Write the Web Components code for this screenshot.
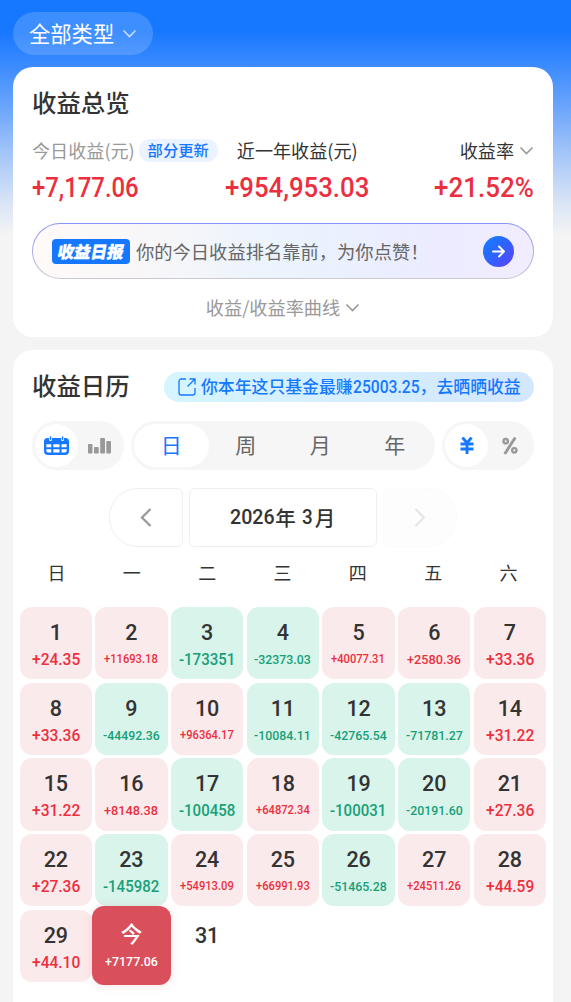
<!DOCTYPE html>
<html lang="zh-CN">
<head>
<meta charset="utf-8">
<meta name="viewport" content="width=device-width, initial-scale=1">
<title>收益总览</title>
<style>
    html, body { margin: 0; padding: 0; }
    body {
        height: 1002px;
        overflow: hidden;
        background: #f4f4f4;
        color: #333;
        font-family: "Noto Sans CJK SC", sans-serif;
    }
</style>
</head>
<body>
<profit-page></profit-page>

<script>
    // number set in a narrow face, squeezed to the given width
    class NumText extends HTMLElement {
        connectedCallback() {
            const width = Number(this.getAttribute('w'));
            this.attachShadow({ mode: 'open' }).innerHTML = `
                <style>
                    :host {
                        display: inline-block;
                        width: ${width}px;
                        font-family: Roboto, "Liberation Sans", sans-serif;
                        font-weight: 500;
                        white-space: nowrap;
                        text-align: left;
                    }
                    span { display: inline-block; transform-origin: 0 50%; }
                </style>
                <span><slot></slot></span>
            `;
            const span = this.shadowRoot.querySelector('span');
            span.style.transform = `scaleX(${width / span.offsetWidth})`;
        }
    }

    const ICONS = {
        down: '<path d="M1.5 1.5 7.5 7.5l6-6" fill="none" stroke="currentColor" stroke-width="1.6"/>',
        left: '<path d="M10.5 1 2 9.5l8.5 8.5" fill="none" stroke="currentColor" stroke-width="2.3"/>',
        right: '<path d="M1.5 1 10 9.5 1.5 18" fill="none" stroke="currentColor" stroke-width="1.8"/>',
        arrow: '<path d="M1 6.5h11M7 1.5l5 5-5 5" fill="none" stroke="currentColor" stroke-width="1.9" stroke-linecap="round" stroke-linejoin="round"/>',
        share: '<path d="M8 1H3.2A2.2 2.2 0 0 0 1 3.2v11.6A2.2 2.2 0 0 0 3.2 17h11.6a2.2 2.2 0 0 0 2.2-2.2V10M11.5 1H17v5.500M17 1 9.500 8.500" fill="none" stroke="currentColor" stroke-width="1.300"/>',
        calendar: '<path fill="currentColor" d="M3.500 2H5v1.500a1.500 1.500 0 0 0 3 0V2h9v1.500a1.500 1.500 0 0 0 3 0V2h1.500A3.500 3.500 0 0 1 25 5.500V15a4 4 0 0 1-4 4H4a4 4 0 0 1-4-4V5.500A3.500 3.500 0 0 1 3.500 2z"/><path stroke="currentColor" stroke-width="1.500" stroke-linecap="round" d="M6.500 1v2.200M18.500 1v2.200"/><g fill="#fff"><path d="M2.300 8.300h5v3h-5zM9.300 8.300h6.200v3H9.300zM17.500 8.300h5.200v3h-5.200zM2.300 13.200h5v3.200H4a1.700 1.700 0 0 1-1.700-1.700zM9.300 13.200h6.200v3.200H9.300zM17.500 13.200h5.200v1.500a1.700 1.700 0 0 1-1.700 1.700h-3.500z"/></g>',
        bars: '<g fill="currentColor"><rect y="6" width="4.500" height="9.500" rx=".8"/><rect x="6" y="9" width="4.700" height="6.500" rx=".8"/><rect x="12.200" width="4.800" height="15.500" rx=".8"/><rect x="18.300" y="3" width="4.700" height="12.500" rx=".8"/></g>',
        yen: '<path d="M2.500 .5 7 6 11.500 .5M7 6v11M.5 7h13M.5 12h13" fill="none" stroke="currentColor" stroke-width="2.900"/>',
        percent: '<g fill="none" stroke="currentColor" stroke-width="2.300"><circle cx="3.700" cy="4.200" r="2.200"/><circle cx="12.300" cy="13.300" r="2.200"/><path stroke-width="2.900" d="M13.300 .5 2.700 17"/></g>'
    };

    class UiIcon extends HTMLElement {
        connectedCallback() {
            const w = this.getAttribute('w');
            const h = this.getAttribute('h');
            this.attachShadow({ mode: 'open' }).innerHTML = `
                <style>
                    :host { display: block; flex: none; width: ${w}px; height: ${h}px; }
                    svg { display: block; }
                </style>
                <svg width="${w}" height="${h}" viewBox="0 0 ${w} ${h}">${ICONS[this.getAttribute('name')]}</svg>
            `;
        }
    }

    class UiCard extends HTMLElement {
        connectedCallback() {
            this.attachShadow({ mode: 'open' }).innerHTML = `
                <style>
                    :host {
                        display: block;
                        box-sizing: border-box;
                        border-radius: 20px;
                        background: #fff;
                    }
                </style>
                <slot></slot>
            `;
        }
    }

    class DailyBanner extends HTMLElement {
        connectedCallback() {
            this.attachShadow({ mode: 'open' }).innerHTML = `
                <style>
                    :host {
                        display: flex;
                        align-items: center;
                        box-sizing: border-box;
                        height: 56px;
                        padding: 0 19.5px 0 19px;
                        border: 1px solid transparent;
                        border-radius: 28px;
                        background:
                            linear-gradient(90deg, #fffaf8 0%, #f9f7f8 20%, #eaf3fe 52%, #ecebff 82%, #f2edfe 100%) padding-box,
                            linear-gradient(180deg, #8794f8, #cbc9d3) border-box;
                        font-size: 18.300px;
                        color: #666;
                    }
                    .badge {
                        width: 78px;
                        height: 25px;
                        border-radius: 4px;
                        background: #1677ff;
                        color: #fff;
                        font-size: 16.500px;
                        font-weight: 900;
                        line-height: 24px;
                        text-align: center;
                    }
                    .badge span { display: inline-block; transform: skewX(-10deg); -webkit-text-stroke: .4px #fff; }
                    .text { flex: 1; padding-left: 6px; line-height: 26px; white-space: nowrap; }
                    .go {
                        display: grid;
                        place-items: center;
                        width: 31px;
                        height: 31px;
                        border-radius: 50%;
                        background: linear-gradient(135deg, #157bff 10%, #345fff 55%, #5b43ff 95%);
                        color: #fff;
                    }
                </style>
                <div class="badge"><span>收益日报</span></div>
                <div class="text"><slot></slot></div>
                <div class="go"><ui-icon name="arrow" w="13" h="13"></ui-icon></div>
            `;
        }
    }

    class SegGroup extends HTMLElement {
        connectedCallback() {
            this.attachShadow({ mode: 'open' }).innerHTML = `
                <style>
                    :host {
                        display: flex;
                        box-sizing: border-box;
                        height: 49px;
                        padding: 3px;
                        border-radius: 25px;
                        background: #f6f6f6;
                        color: #666;
                        font-size: 21px;
                        line-height: 41px;
                    }
                    ::slotted(*) {
                        display: flex;
                        flex: 1;
                        justify-content: center;
                        border-radius: 22px;
                    }
                    ::slotted(.on) { background: #fff; color: #1677ff; }
                    ::slotted(.off) { color: #999; }
                    ::slotted(.icon) { align-items: center; }
                </style>
                <slot></slot>
            `;
        }
    }

    class DayCell extends HTMLElement {
        connectedCallback() {
            const amount = this.getAttribute('amount') || '';
            const today = this.hasAttribute('today');
            let size = 16.200;
            let width = amount.length === 7 ? 56.500 : 48;
            if (amount.length === 8) { size = 13.200; width = 54; }
            if (amount.length === 9) {
                size = amount[0] === '-' ? 13.200 : 12;
                width = amount[0] === '-' ? 57 : 54;
            }
            let bg = 'transparent';
            if (amount) bg = amount[0] === '-' ? '#d8f4eb' : '#fbeaeb';
            this.attachShadow({ mode: 'open' }).innerHTML = `
                <style>
                    :host {
                        display: flex;
                        flex-direction: column;
                        align-items: center;
                        box-sizing: border-box;
                        padding-top: 13px;
                        border-radius: 12px;
                        background: ${bg};
                        color: ${amount[0] === '-' ? '#17a078' : '#eb2f3f'};
                    }
                    :host([today]) {
                        z-index: 1;
                        margin: -3.300px;
                        padding-top: 16px;
                        background: #d94f5b;
                        color: #fff;
                        box-shadow: 0 1px 10px rgba(217, 79, 91, .16);
                    }
                    .day {
                        height: 25px;
                        color: #333;
                        font: 500 21.500px/25px Roboto, "Noto Sans CJK SC", sans-serif;
                        letter-spacing: -.2px;
                    }
                    :host([today]) .day { color: #fff; }
                    .amount { height: 29px; font-size: ${size}px; line-height: 29px; }
                </style>
                <div class="day"><slot></slot></div>
                ${amount ? `<num-text class="amount" w="${today ? 53 : width}">${amount}</num-text>` : ''}
            `;
        }
    }

    class MonthGrid extends HTMLElement {
        connectedCallback() {
            const amounts = [
                '+24.35', '+11693.18', '-173351', '-32373.03', '+40077.31', '+2580.36', '+33.36',
                '+33.36', '-44492.36', '+96364.17', '-10084.11', '-42765.54', '-71781.27', '+31.22',
                '+31.22', '+8148.38', '-100458', '+64872.34', '-100031', '-20191.60', '+27.36',
                '+27.36', '-145982', '+54913.09', '+66991.93', '-51465.28', '+24511.26', '+44.59',
                '+44.10', '+7177.06', ''
            ];
            const weekdays = [...'日一二三四五六'].map(d => `<div class="week">${d}</div>`).join('');
            const days = amounts.map((amount, i) => {
                const day = i + 1;
                return `<day-cell amount="${amount}" ${day === 30 ? 'today' : ''}>${day === 30 ? '今' : day}</day-cell>`;
            }).join('');
            this.attachShadow({ mode: 'open' }).innerHTML = `
                <style>
                    :host { display: block; padding: 0 6.500px; }
                    .grid { display: grid; grid-template-columns: repeat(7, 1fr); gap: 3.400px; }
                    .weeks { padding: 0 1.500px 0 1px; }
                    .days { grid-auto-rows: 72.300px; }
                    .week {
                        height: 60px;
                        font-size: 18px;
                        line-height: 50px;
                        text-align: center;
                    }
                </style>
                <div class="grid weeks">${weekdays}</div>
                <div class="grid days">${days}</div>
            `;
        }
    }

    class ProfitPage extends HTMLElement {
        connectedCallback() {
            this.attachShadow({ mode: 'open' }).innerHTML = `
                <style>
                    :host {
                        display: block;
                        box-sizing: border-box;
                        height: 1002px;
                        padding: 12px 18.500px 0 13px;
                        background: linear-gradient(180deg, #1677ff 0, #1677ff 30px, #3a8aff 64px, #6ea7fb 110px, #a9c8f8 158px, #dbe6f5 205px, #f4f4f4 236px);
                    }
                    .type {
                        display: flex;
                        align-items: center;
                        gap: 8px;
                        box-sizing: border-box;
                        width: 140px;
                        height: 43px;
                        padding-left: 16px;
                        border-radius: 22px;
                        background: rgba(255, 255, 255, .17);
                        color: #fff;
                        font-size: 21.300px;
                    }
                    .type span { height: 43px; line-height: 41px; }
                    .type ui-icon { opacity: .7; }
                    .overview { height: 270px; margin-top: 12px; padding: 17px 18.500px 0 19px; }
                    h2 { margin: 0; font-size: 24.400px; font-weight: 500; line-height: 36px; }
                    .labels, .values { display: flex; justify-content: space-between; }
                    .labels { height: 28px; margin-top: 16px; align-items: center; font-size: 18.100px; white-space: nowrap; }
                    .today { display: flex; align-items: center; color: #999; }
                    .tag {
                        width: 79px;
                        height: 23px;
                        margin-left: 4px;
                        border-radius: 12px;
                        background: #eaf3ff;
                        color: #1677ff;
                        font-size: 15.300px;
                        font-weight: 500;
                        line-height: 21px;
                        text-align: center;
                    }
                    .year { margin-right: 83px; }
                    .rate { display: flex; align-items: center; gap: 5px; }
                    .rate ui-icon { color: #999; }
                    .values { height: 36px; margin-top: 6px; margin-bottom: 17px; color: #eb2f3f; font-size: 27px; line-height: 36px; }
                    .values num-text:nth-child(2) { margin-left: 20px; }
                    .curve {
                        display: flex;
                        justify-content: center;
                        align-items: center;
                        gap: 5px;
                        height: 56px;
                        color: #999;
                        font-size: 18.200px;
                    }
                    .calendar { height: 680px; margin-top: 12.500px; padding-top: 17.500px; }
                    .head, .segs { display: flex; justify-content: space-between; padding: 0 18.500px 0 19px; }
                    .share {
                        display: flex;
                        align-items: center;
                        gap: 5px;
                        box-sizing: border-box;
                        width: 370px;
                        height: 30px;
                        margin-top: 4.500px;
                        padding-left: 14px;
                        border-radius: 15px;
                        background: linear-gradient(90deg, #d5f5ff, #d3e7ff);
                        color: #1677ff;
                        font-size: 16.850px;
                        font-weight: 500;
                        line-height: 28px;
                        white-space: nowrap;
                    }
                    .share num-text { font-size: 17.500px; }
                    .segs { margin-top: 18px; }
                    .view, .unit { width: 92px; }
                    .period { width: 304px; }
                    .nav { display: flex; justify-content: center; gap: 6px; margin-top: 18px; }
                    .nav > div {
                        display: flex;
                        align-items: center;
                        justify-content: center;
                        box-sizing: border-box;
                        height: 59px;
                        border: 1px solid #efefef;
                        border-radius: 6px;
                    }
                    .nav .prev { width: 74px; border-radius: 29px 6px 6px 29px; color: #999; }
                    .nav .month { width: 188px; font-size: 20.500px; font-weight: 500; line-height: 55px; }
                    .nav .next { width: 74px; border-color: #fbfbfb; border-radius: 6px 29px 29px 6px; background: #fdfdfd; color: #e2e2e2; }
                    .three { margin: 0 2px 0 6px; }
                </style>
                <div class="type"><span>全部类型</span><ui-icon name="down" w="15" h="9"></ui-icon></div>
                <ui-card class="overview">
                    <h2>收益总览</h2>
                    <div class="labels">
                        <div class="today">今日收益(元)<span class="tag">部分更新</span></div>
                        <div class="year">近一年收益(元)</div>
                        <div class="rate">收益率<ui-icon name="down" w="15" h="9"></ui-icon></div>
                    </div>
                    <div class="values">
                        <num-text w="107">+7,177.06</num-text>
                        <num-text w="144">+954,953.03</num-text>
                        <num-text w="100">+21.52%</num-text>
                    </div>
                    <daily-banner>你的今日收益排名靠前，为你点赞！</daily-banner>
                    <div class="curve">收益/收益率曲线<ui-icon name="down" w="15" h="9"></ui-icon></div>
                </ui-card>
                <ui-card class="calendar">
                    <div class="head">
                        <h2>收益日历</h2>
                        <div class="share">
                            <ui-icon name="share" w="18" h="18"></ui-icon>
                            <span>你本年这只基金最赚<num-text w="67">25003.25</num-text>，去晒晒收益</span>
                        </div>
                    </div>
                    <div class="segs">
                        <seg-group class="view">
                            <div class="on icon"><ui-icon name="calendar" w="25" h="20"></ui-icon></div>
                            <div class="off icon"><ui-icon name="bars" w="23" h="16"></ui-icon></div>
                        </seg-group>
                        <seg-group class="period">
                            <div class="on">日</div><div>周</div><div>月</div><div>年</div>
                        </seg-group>
                        <seg-group class="unit">
                            <div class="on icon"><ui-icon name="yen" w="14" h="18"></ui-icon></div>
                            <div class="off icon"><ui-icon name="percent" w="16" h="18"></ui-icon></div>
                        </seg-group>
                    </div>
                    <div class="nav">
                        <div class="prev"><ui-icon name="left" w="12" h="19"></ui-icon></div>
                        <div class="month"><num-text w="45">2026</num-text>年<num-text class="three" w="11">3</num-text>月</div>
                        <div class="next"><ui-icon name="right" w="12" h="19"></ui-icon></div>
                    </div>
                    <month-grid></month-grid>
                </ui-card>
            `;
        }
    }

    customElements.define('num-text', NumText);
    customElements.define('ui-icon', UiIcon);
    customElements.define('ui-card', UiCard);
    customElements.define('daily-banner', DailyBanner);
    customElements.define('seg-group', SegGroup);
    customElements.define('day-cell', DayCell);
    customElements.define('month-grid', MonthGrid);
    customElements.define('profit-page', ProfitPage);
</script>
</body>
</html>
